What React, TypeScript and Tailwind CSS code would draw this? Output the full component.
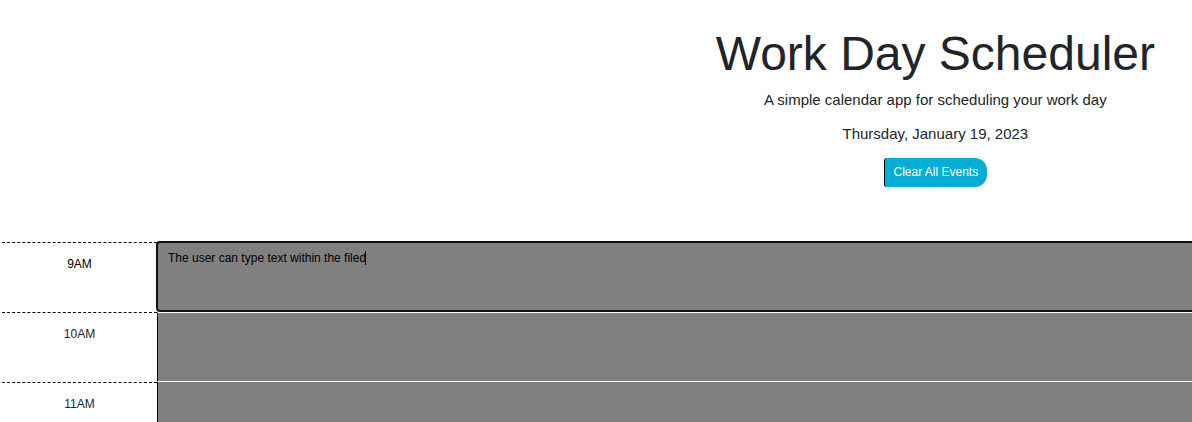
import React from "react";

type Slot = { hour: string; event: string; tone: string; edge: string };

const slots: Slot[] = [
  {
    hour: "9AM",
    event: "The user can type text within the filed",
    tone: "text-black",
    edge: "-ml-px -mt-px h-[71px] rounded border-2 border-[#101010]",
  },
  { hour: "10AM", event: "", tone: "text-[#212529]", edge: "h-[70px] border-y border-l border-y-white border-l-black" },
  { hour: "11AM", event: "", tone: "text-[#212529]", edge: "h-[70px] border-b border-l border-b-white border-l-black" },
];

export default function App() {
  return (
    <div className="h-screen overflow-hidden bg-white font-['Liberation_Sans',Arial,sans-serif] text-[#212529]">
      <header className="flex h-[242px] justify-end pr-[37px] pt-6">
        <div className="flex flex-col items-center text-center">
          <h1 className="mb-[5px] text-[48px] leading-[60px]">Work Day Scheduler</h1>
          <p className="mb-3 text-[15px] leading-[22px]">A simple calendar app for scheduling your work day</p>
          <p className="mb-[13px] text-[15px] leading-[22px]">Thursday, January 19, 2023</p>
          <button
            type="button"
            className="h-[29px] rounded-l-[3px] rounded-r-[12px] border-l border-black bg-[#06aed5] px-[9px] pb-0.5 text-[12px] leading-[18px] text-white"
          >
            Clear All Events
          </button>
        </div>
      </header>
      <main className="pl-0.5">
        {slots.map((slot) => (
          <div key={slot.hour} className="flex h-[70px]">
            <label
              htmlFor={slot.hour}
              className={`w-[155px] shrink-0 border-t border-dashed border-t-black pt-3 text-center text-[12px] leading-[18px] ${slot.tone}`}
            >
              {slot.hour}
            </label>
            <div className="relative min-w-0 flex-1">
              <div className="-mr-1">
                <textarea
                  id={slot.hour}
                  defaultValue={slot.event}
                  className={`block w-full resize-none bg-[#808080] px-[10px] py-1.5 text-[12px] leading-[18px] text-black outline-none ${slot.edge}`}
                />
              </div>
              {slot.event && <span className="absolute left-[208px] top-[9px] h-[14px] w-px bg-black" />}
            </div>
          </div>
        ))}
      </main>
    </div>
  );
}
